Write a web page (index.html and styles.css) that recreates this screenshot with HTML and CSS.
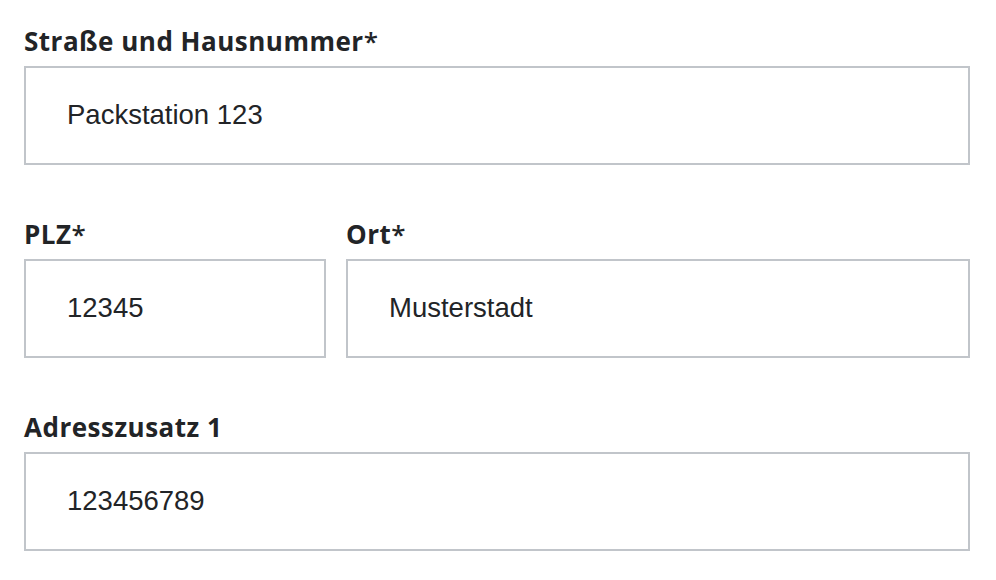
FILE: index.html
```html
<!DOCTYPE html>
<html lang="de">
<head>
<meta charset="utf-8">
<title>Adresse</title>
<link rel="stylesheet" href="styles.css">
</head>
<body>
<form class="form">
  <div class="field">
    <label class="label" for="street">Straße und Hausnummer<span class="req">*</span></label>
    <input class="input" id="street" type="text" value="Packstation 123">
  </div>
  <div class="row">
    <div class="field field-zip">
      <label class="label" for="zip">PLZ<span class="req">*</span></label>
      <input class="input" id="zip" type="text" value="12345">
    </div>
    <div class="field field-city">
      <label class="label" for="city">Ort<span class="req">*</span></label>
      <input class="input" id="city" type="text" value="Musterstadt">
    </div>
  </div>
  <div class="field">
    <label class="label" for="extra">Adresszusatz 1</label>
    <input class="input" id="extra" type="text" value="123456789">
  </div>
</form>
</body>
</html>
```
FILE: styles.css
```css
html, body {
  margin: 0;
  padding: 0;
  background: #ffffff;
}
body {
  font-family: "Liberation Sans", Arial, sans-serif;
  color: #222427;
}
.form {
  width: 946px;
  padding: 25px 0 0 24px;
  display: flex;
  flex-direction: column;
  gap: 53px;
}
.row {
  display: flex;
  gap: 20px;
}
.field {
  display: flex;
  flex-direction: column;
  gap: 9px;
}
.field-zip {
  width: 302px;
  flex: none;
}
.field-city {
  flex: 1;
}
.label {
  font-family: "Open Sans", Lato, sans-serif;
  font-weight: 700;
  font-size: 26px;
  letter-spacing: 0.5px;
  line-height: 32px;
  height: 32px;
  color: #222427;
}
.req {
  font-weight: 600;
  letter-spacing: 0;
}
.input {
  box-sizing: border-box;
  width: 100%;
  height: 99px;
  margin: 0;
  border: 2px solid #c1c5ca;
  border-radius: 0;
  background: #ffffff;
  padding: 0 20px 2px 41px;
  font-family: "Liberation Sans", Arial, sans-serif;
  font-size: 27.5px;
  color: #222427;
  outline: none;
}
```
